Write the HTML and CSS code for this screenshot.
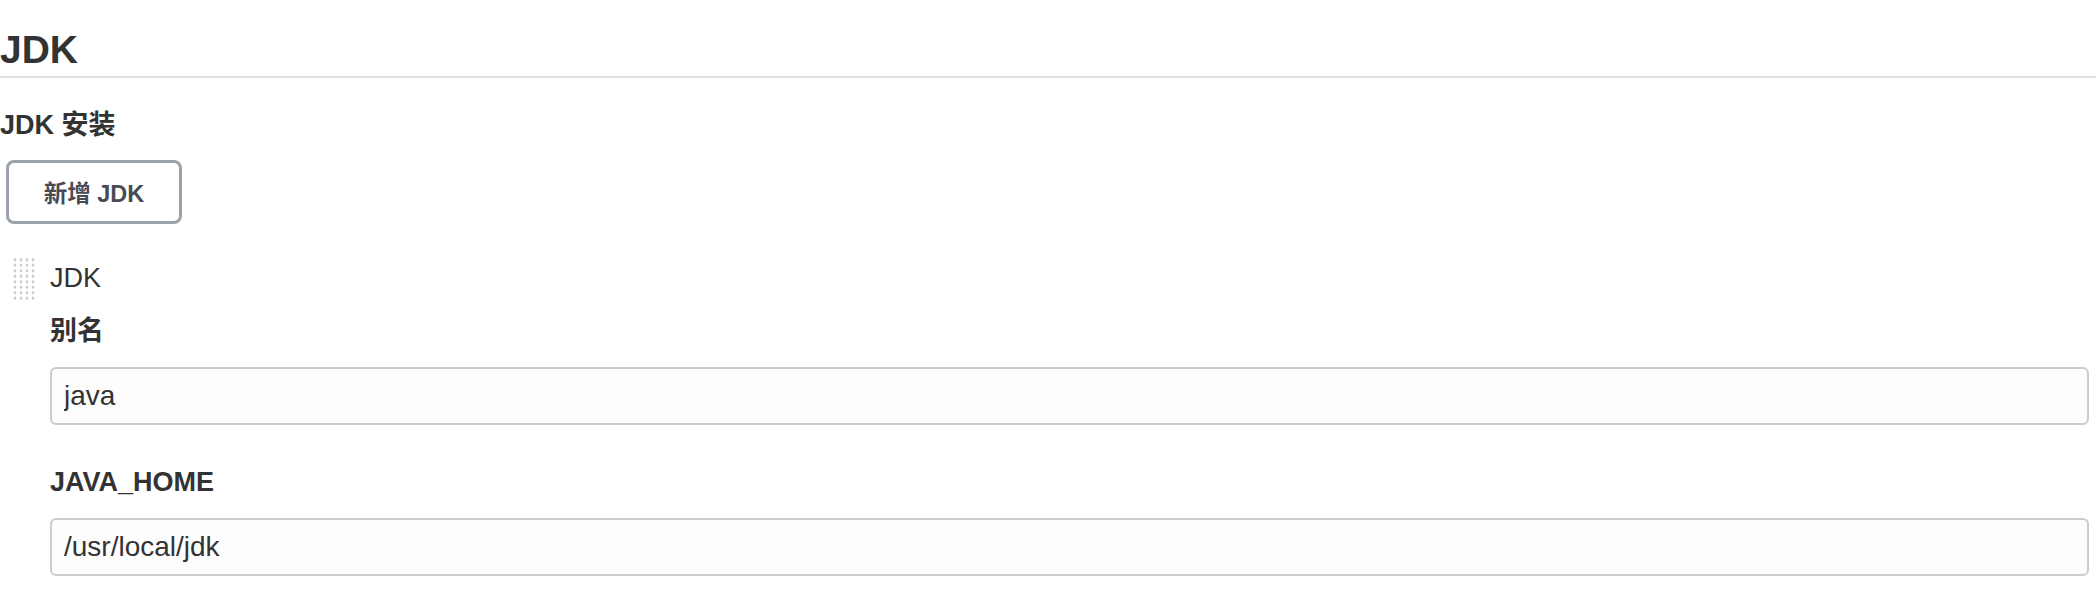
FILE: index.html
```html
<!DOCTYPE html>
<html lang="zh-CN">
<head>
<meta charset="utf-8">
<title>JDK</title>
<link rel="stylesheet" href="styles.css">
</head>
<body>
<main class="page">
  <section class="section">
    <h1 class="section-title">JDK</h1>
    <div class="group">
      <div class="group-label">JDK 安装</div>
      <button class="add-btn" type="button">新增 JDK</button>
      <div class="repeated">
        <div class="drag-handle"></div>
        <div class="repeated-body">
          <div class="item-name">JDK</div>
          <div class="field">
            <div class="field-label">别名</div>
            <input class="text-input" type="text" value="java">
          </div>
          <div class="field field-second">
            <div class="field-label">JAVA_HOME</div>
            <input class="text-input" type="text" value="/usr/local/jdk">
          </div>
        </div>
      </div>
    </div>
  </section>
</main>
</body>
</html>
```

FILE: styles.css
```css
html, body {
  margin: 0;
  padding: 0;
  background: #ffffff;
}

body {
  font-family: "Liberation Sans", "Noto Sans CJK SC", sans-serif;
  color: #333333;
}

.page {
  padding: 0;
}

.section-title {
  margin: 27px 0 0 0;
  padding: 0 0 4px 0;
  font-size: 39px;
  line-height: 45px;
  font-weight: 700;
  color: #333333;
  border-bottom: 2px solid #e2e2e2;
}

.group {
  padding-right: 7px;
}

.group-label {
  margin-top: 29px;
  font-size: 27px;
  line-height: 36px;
  font-weight: 700;
  color: #333333;
}

.add-btn {
  display: flex;
  align-items: center;
  justify-content: center;
  box-sizing: border-box;
  width: 176px;
  height: 64px;
  margin: 17px 0 0 6px;
  padding: 0;
  background: #ffffff;
  border: 3px solid #9ba2aa;
  border-radius: 8px;
  font-family: "Liberation Sans", "Noto Sans CJK SC", sans-serif;
  font-size: 23.5px;
  font-weight: 700;
  color: #4a4a55;
}

.repeated {
  display: flex;
  align-items: flex-start;
  margin-top: 33px;
}

.drag-handle {
  flex: none;
  width: 24px;
  height: 44px;
  margin-left: 12px;
  background-image: radial-gradient(circle, #c6c6c6 1.1px, rgba(255,255,255,0) 1.7px);
  background-size: 6px 5.5px;
  background-position: 0 0;
}

.repeated-body {
  flex: 1;
  min-width: 0;
  margin-left: 14px;
  padding-top: 3px;
}

.item-name {
  font-size: 27px;
  line-height: 36px;
  font-weight: 400;
  color: #333333;
}

.field {
  margin-top: 17px;
}

.field-second {
  margin-top: 39px;
}

.field-label {
  font-size: 27px;
  line-height: 36px;
  font-weight: 700;
  color: #333333;
  margin-bottom: 18px;
}

.text-input {
  display: block;
  box-sizing: border-box;
  width: 100%;
  height: 58px;
  margin: 0;
  padding: 0 12px;
  border: 2px solid #cccccc;
  border-radius: 6px;
  background: #fdfdfd;
  font-family: "Liberation Sans", "Noto Sans CJK SC", sans-serif;
  font-size: 28px;
  color: #333333;
  outline: none;
}
```
